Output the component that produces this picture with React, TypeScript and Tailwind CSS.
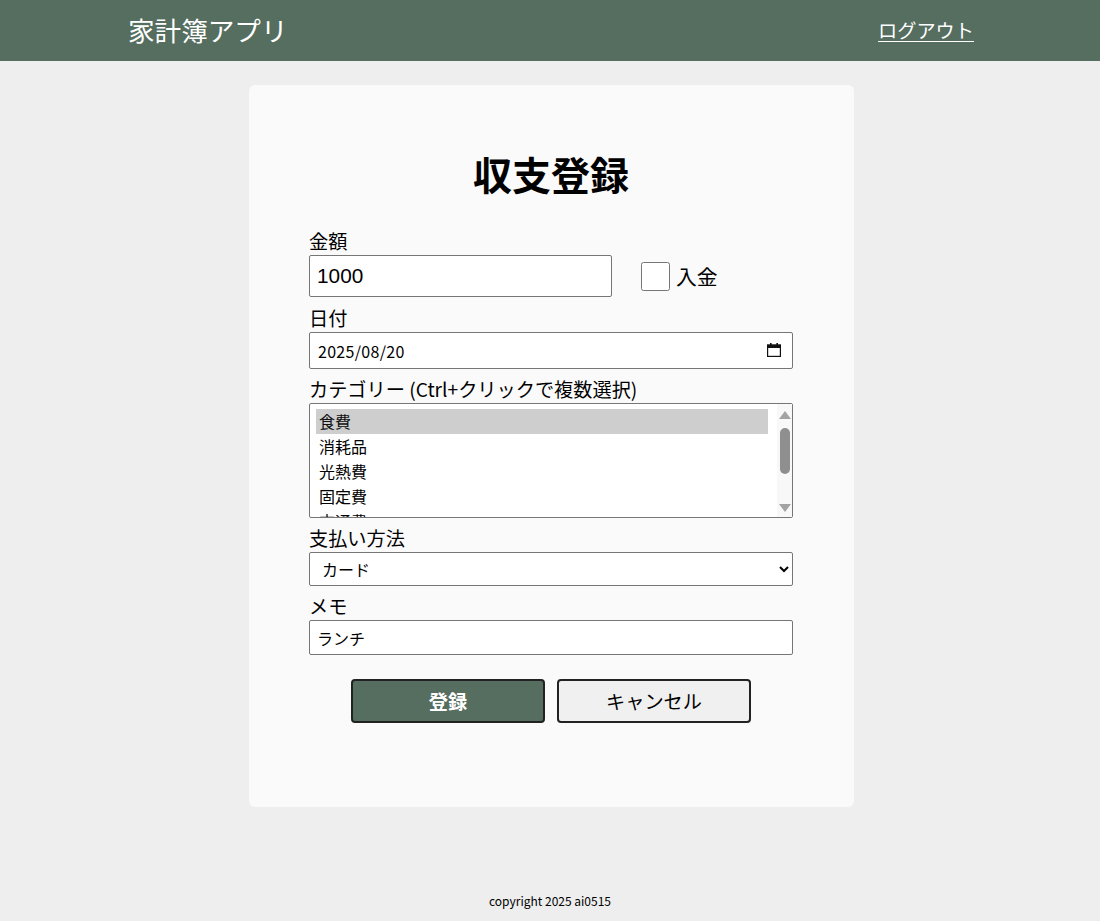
import React, { useState } from 'react';

const FONT = '"Noto Sans CJK JP", "Noto Sans", sans-serif';

function CalendarIcon() {
  return (
    <svg width="14" height="14" viewBox="0 0 14 14" className="block">
      <rect x="0.5" y="2" width="13" height="11.5" fill="none" stroke="#111" strokeWidth="1.4" />
      <rect x="0.5" y="2" width="13" height="3" fill="#111" />
      <rect x="3" y="0" width="1.6" height="3" fill="#111" />
      <rect x="9.4" y="0" width="1.6" height="3" fill="#111" />
    </svg>
  );
}

function FakeScrollbar() {
  return (
    <div className="pointer-events-none absolute bottom-[1px] right-[1px] top-[1px] flex w-[15px] flex-col items-center bg-[#f8f8f8]">
      <svg width="12" height="8" viewBox="0 0 12 8" className="mt-[7px]">
        <polygon points="6,0 12,8 0,8" fill="#a3a3a3" />
      </svg>
      <div className="mt-[9px] h-[46px] w-[10px] rounded-[5px] bg-[#8f8f8f]" />
      <div className="flex-1" />
      <svg width="12" height="8" viewBox="0 0 12 8" className="mb-[5px]">
        <polygon points="0,0 12,0 6,8" fill="#a3a3a3" />
      </svg>
    </div>
  );
}

export default function App() {
  const [amount, setAmount] = useState('1000');
  const [date, setDate] = useState('2025/08/20');
  const [cats, setCats] = useState<string[]>(['食費']);
  const [pay, setPay] = useState('カード');
  const [memo, setMemo] = useState('ランチ');
  const [income, setIncome] = useState(false);

  return (
    <div className="min-h-screen bg-[#eeeeee] text-black" style={{ fontFamily: FONT }}>
      <header className="h-[61px] bg-[#556e60] pl-[2px]">
        <div className="mx-auto flex h-full w-[846px] items-center justify-between">
          <span className="text-[26.6px] leading-none text-white">家計簿アプリ</span>
          <a href="#" className="text-[19.2px] leading-none text-white underline underline-offset-[3px]">
            ログアウト
          </a>
        </div>
      </header>

      <main className="mt-[24px] flex justify-center pl-[3px]">
        <div className="h-[722px] w-[605px] rounded-[6px] bg-[#fafafa] pl-[60px] pr-[61px] pt-[59px]">
          <h1 className="mb-[26px] text-center text-[39px] font-bold leading-[58px]">収支登録</h1>

          <label className="block text-[19.2px] leading-[27px]">金額</label>
          <div className="flex items-center">
            <input
              type="text"
              value={amount}
              onChange={(e) => setAmount(e.target.value)}
              className="h-[42px] w-[303px] rounded-[2px] border border-[#767676] bg-white px-[7px] text-[20.8px] outline-none"
              style={{ fontFamily: '"Liberation Sans", Arial, sans-serif' }}
            />
            <input
              type="checkbox"
              checked={income}
              onChange={(e) => setIncome(e.target.checked)}
              className="m-0 ml-[29px] h-[29px] w-[29px] appearance-auto"
            />
            <span className="ml-[6px] text-[20.8px] leading-none">入金</span>
          </div>

          <label className="mt-[8px] block text-[19.2px] leading-[27px]">日付</label>
          <div className="relative">
            <input
              type="text"
              value={date}
              onChange={(e) => setDate(e.target.value)}
              className="block h-[37px] w-full rounded-[2px] border border-[#767676] bg-white px-[8px] text-[16px] tracking-[0.3px] outline-none"
            />
            <div className="pointer-events-none absolute right-[12px] top-[11px]">
              <CalendarIcon />
            </div>
          </div>

          <label className="mt-[7px] block text-[19.2px] leading-[27px]">カテゴリー (Ctrl+クリックで複数選択)</label>
          <div className="relative">
            <select
              multiple
              value={cats}
              onChange={(e) => setCats(Array.from(e.target.selectedOptions).map((o) => o.value))}
              className="block h-[115px] w-full overflow-hidden rounded-[2px] border border-[#767676] bg-white pb-[6px] pl-[6px] pr-[24px] pt-[5px] text-[16px] outline-none"
            >
              {['食費', '消耗品', '光熱費', '固定費', '交通費', '交際費', 'その他'].map((c) => (
                <option key={c} value={c} className="px-[3px] pb-[1px] pt-0 leading-[23px]">
                  {c}
                </option>
              ))}
            </select>
            <FakeScrollbar />
          </div>

          <label className="mt-[7px] block text-[19.2px] leading-[27px]">支払い方法</label>
          <select
            value={pay}
            onChange={(e) => setPay(e.target.value)}
            className="block h-[34px] w-full rounded-[2px] border border-[#767676] bg-white px-[8px] text-[16px] outline-none"
          >
            <option value="現金">現金</option>
            <option value="カード">カード</option>
            <option value="電子マネー">電子マネー</option>
          </select>

          <label className="mt-[7px] block text-[19.2px] leading-[27px]">メモ</label>
          <input
            type="text"
            value={memo}
            onChange={(e) => setMemo(e.target.value)}
            className="block h-[35px] w-full rounded-[2px] border border-[#767676] bg-white px-[7px] text-[16px] outline-none"
          />

          <div className="mt-[24px] flex justify-center gap-[12px]">
            <button className="h-[44px] w-[194px] rounded-[4px] border-2 border-[#222222] bg-[#556e60] text-[19.2px] font-bold text-white">
              登録
            </button>
            <button className="h-[44px] w-[194px] rounded-[4px] border-2 border-[#222222] bg-[#f0f0f0] text-[19.2px] text-black">
              キャンセル
            </button>
          </div>
        </div>
      </main>

      <footer className="mt-[85px] text-center text-[12px] leading-[17px]">copyright 2025 ai0515</footer>
    </div>
  );
}
